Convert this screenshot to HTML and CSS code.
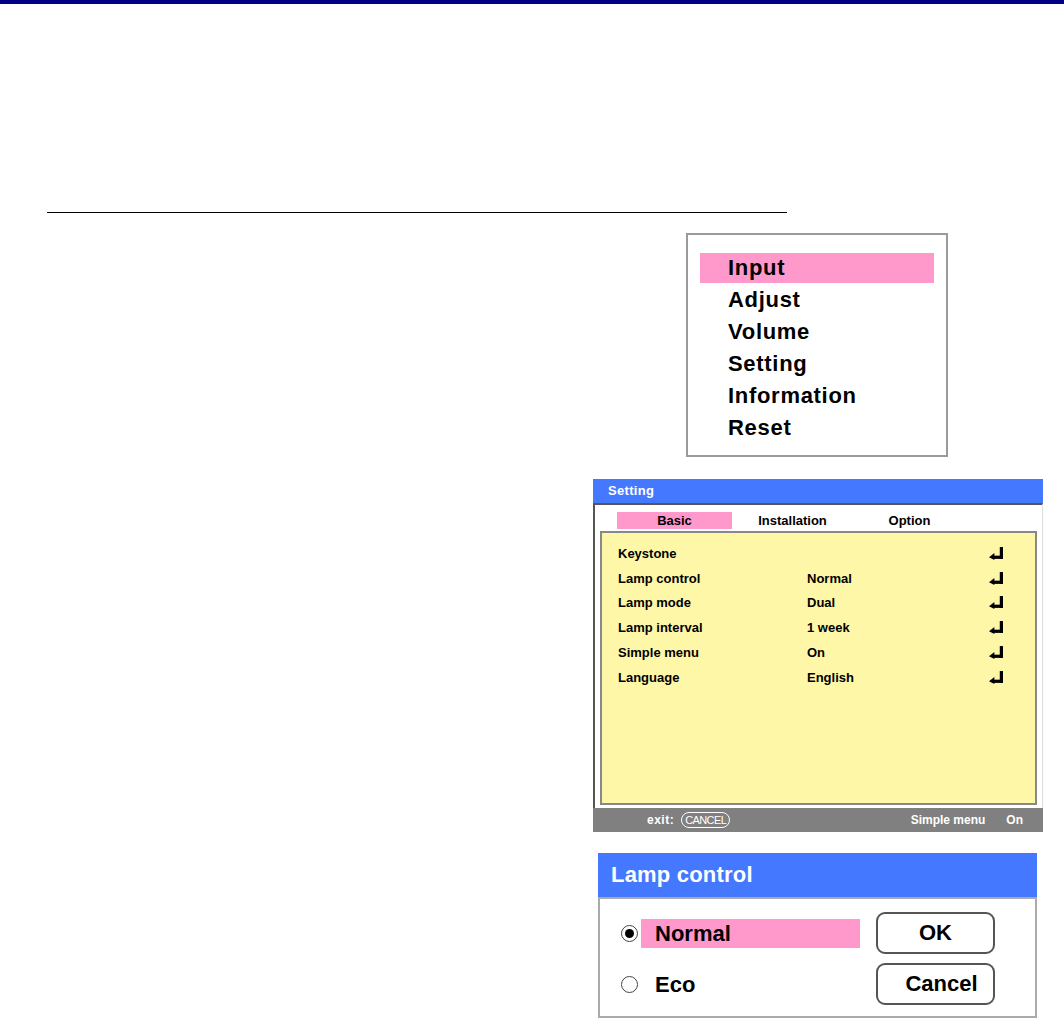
FILE: index.html
```html
<!DOCTYPE html>
<html lang="en">
  <head>
    <meta charset="UTF-8" />
    <title>Setting menu</title>
    <link rel="stylesheet" href="styles.css">
  </head>
  <body>
    <div class="topbar"></div>

    <div class="page">
      <div class="rule"></div>

      <div class="shots">
        <!-- главное меню -->
        <div class="main-menu">
          <div class="main-menu__item active">Input</div>
          <div class="main-menu__item">Adjust</div>
          <div class="main-menu__item">Volume</div>
          <div class="main-menu__item">Setting</div>
          <div class="main-menu__item">Information</div>
          <div class="main-menu__item">Reset</div>
        </div>

        <!-- меню Setting -->
        <div class="osd">
          <div class="osd__title">Setting</div>
          <div class="osd__body">
            <div class="tabs">
              <div class="tab active">Basic</div>
              <div class="tab">Installation</div>
              <div class="tab">Option</div>
            </div>
            <div class="list">
              <div class="row"><span class="row__label">Keystone</span><span class="row__value"></span><svg class="enter" viewBox="0 0 13 12"><rect x="10" y="0" width="3" height="11"/><rect x="4" y="8" width="9" height="3"/><polygon points="0,9.5 5,5.5 5,12"/></svg></div>
              <div class="row"><span class="row__label">Lamp control</span><span class="row__value">Normal</span><svg class="enter" viewBox="0 0 13 12"><rect x="10" y="0" width="3" height="11"/><rect x="4" y="8" width="9" height="3"/><polygon points="0,9.5 5,5.5 5,12"/></svg></div>
              <div class="row"><span class="row__label">Lamp mode</span><span class="row__value">Dual</span><svg class="enter" viewBox="0 0 13 12"><rect x="10" y="0" width="3" height="11"/><rect x="4" y="8" width="9" height="3"/><polygon points="0,9.5 5,5.5 5,12"/></svg></div>
              <div class="row"><span class="row__label">Lamp interval</span><span class="row__value">1 week</span><svg class="enter" viewBox="0 0 13 12"><rect x="10" y="0" width="3" height="11"/><rect x="4" y="8" width="9" height="3"/><polygon points="0,9.5 5,5.5 5,12"/></svg></div>
              <div class="row"><span class="row__label">Simple menu</span><span class="row__value">On</span><svg class="enter" viewBox="0 0 13 12"><rect x="10" y="0" width="3" height="11"/><rect x="4" y="8" width="9" height="3"/><polygon points="0,9.5 5,5.5 5,12"/></svg></div>
              <div class="row"><span class="row__label">Language</span><span class="row__value">English</span><svg class="enter" viewBox="0 0 13 12"><rect x="10" y="0" width="3" height="11"/><rect x="4" y="8" width="9" height="3"/><polygon points="0,9.5 5,5.5 5,12"/></svg></div>
            </div>
          </div>
          <div class="osd__footer">
            <span class="exit">exit:</span>
            <span class="pill">CANCEL</span>
            <span class="footer__label">Simple menu</span>
            <span class="footer__value">On</span>
          </div>
        </div>

        <!-- диалог Lamp control -->
        <div class="dialog">
          <div class="dialog__title">Lamp control</div>
          <div class="dialog__body">
            <div class="choice">
              <span class="radio checked"></span>
              <span class="choice__label active">Normal</span>
              <button class="dlg-btn">OK</button>
            </div>
            <div class="choice">
              <span class="radio"></span>
              <span class="choice__label">Eco</span>
              <button class="dlg-btn cancel">Cancel</button>
            </div>
          </div>
        </div>
      </div>
    </div>
  </body>
</html>
```

FILE: styles.css
```css
body {
  margin: 0;
  font-family: "Liberation Sans", Arial, sans-serif;
  background: #fff;
  color: #000;
}

.topbar {
  height: 4px;
  background-color: #000080;
}

.page {
  padding-top: 208px;
}

.rule {
  margin-left: 47px;
  width: 740px;
  border-top: 1px solid #000;
}

.shots {
  margin-left: 593px;
  width: 450px;
  display: flex;
  flex-direction: column;
}

/* главное меню */
.main-menu {
  margin: 20px 0 0 93px;
  width: 262px;
  height: 224px;
  box-sizing: border-box;
  border: 2px solid #9a9a9a;
  padding: 18px 12px 0 12px;
}

.main-menu__item {
  height: 30px;
  line-height: 30px;
  margin-bottom: 2px;
  padding-left: 28px;
  font-size: 22px;
  font-weight: bold;
  letter-spacing: 0.7px;
}

.main-menu__item.active {
  background-color: #ff99cc;
}

/* меню Setting */
.osd {
  margin-top: 22px;
  width: 450px;
}

.osd__title {
  height: 24px;
  line-height: 24px;
  padding-left: 15px;
  background-color: #4479ff;
  color: #fff;
  font-size: 13px;
  font-weight: bold;
  letter-spacing: 0.3px;
}

.osd__body {
  border-top: 2px solid #555;
  border-left: 2px solid #555;
  border-right: 1px solid #ddd;
  padding: 7px 5px 3px 5px;
}

.tabs {
  display: flex;
  padding-left: 17px;
  height: 17px;
  margin-bottom: 2px;
}

.tab {
  width: 117px;
  text-align: center;
  font-size: 13px;
  font-weight: bold;
  line-height: 17px;
}

.tab.active {
  width: 115px;
  margin-right: 2px;
  background-color: #ff99cc;
}

.list {
  height: 274px;
  box-sizing: border-box;
  border: 2px solid #888;
  background-color: #fff7a8;
  padding: 8px 32px 0 16px;
}

.row {
  display: flex;
  align-items: center;
  height: 24.8px;
  font-size: 13px;
  font-weight: bold;
}

.row__label {
  width: 189px;
}

.row__value {
  flex: 1;
}

.enter {
  width: 14px;
  height: 13px;
  fill: #000;
}

.osd__footer {
  display: flex;
  align-items: center;
  height: 24px;
  background-color: #808080;
  color: #fff;
  font-size: 12px;
  font-weight: bold;
}

.exit {
  margin-left: 54px;
  letter-spacing: 0.5px;
}

.pill {
  margin-left: 7px;
  height: 14px;
  line-height: 14px;
  padding: 0 3px;
  border: 1.5px solid #fff;
  border-radius: 8px;
  font-size: 11px;
  font-weight: normal;
  letter-spacing: -0.6px;
}

.footer__label {
  margin-left: auto;
}

.footer__value {
  margin-left: 21px;
  margin-right: 20px;
}

/* диалог */
.dialog {
  margin: 21px 0 0 5px;
  width: 439px;
}

.dialog__title {
  height: 44px;
  line-height: 44px;
  padding-left: 13px;
  background-color: #4479ff;
  color: #fff;
  font-size: 22px;
  font-weight: bold;
  letter-spacing: 0.2px;
}

.dialog__body {
  border: 2px solid #aaa;
  padding: 13px 0 11px 21px;
  display: flex;
  flex-direction: column;
  gap: 9px;
}

.choice {
  display: flex;
  align-items: center;
  height: 42px;
}

.radio {
  width: 15px;
  height: 15px;
  border: 1.5px solid #444;
  border-radius: 50%;
  display: flex;
  align-items: center;
  justify-content: center;
}

.radio.checked::after {
  content: "";
  width: 9px;
  height: 9px;
  border-radius: 50%;
  background-color: #000;
}

.choice__label {
  margin-left: 3px;
  width: 205px;
  height: 29px;
  line-height: 29px;
  padding-left: 14px;
  font-size: 22px;
  font-weight: bold;
}

.choice__label.active {
  background-color: #ff99cc;
}

.dlg-btn {
  margin-left: 16px;
  width: 119px;
  height: 42px;
  border: 2px solid #555;
  border-radius: 9px;
  background: #fff;
  font-family: "Liberation Sans", Arial, sans-serif;
  font-size: 22px;
  font-weight: bold;
  color: #000;
  padding: 0;
}

.dlg-btn.cancel {
  padding-left: 12px;
}
```
